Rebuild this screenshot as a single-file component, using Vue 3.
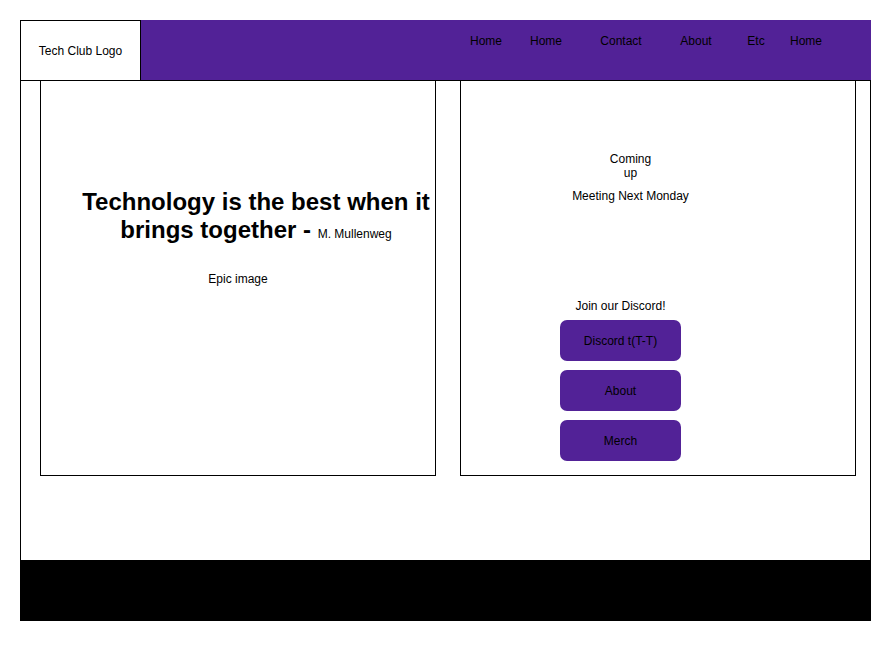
<script setup>
const links = [
  { label: 'Home', size: 'medium' },
  { label: 'Home', size: 'medium' },
  { label: 'Contact', size: 'wide' },
  { label: 'About', size: 'medium' },
  { label: 'Etc', size: 'medium' },
  { label: 'Home', size: 'narrow' },
]
const actions = ['Discord t(T-T)', 'About', 'Merch']
</script>

<template>
  <div class="page">
    <header class="header">
      <div class="logo">Tech Club Logo</div>
      <nav class="nav">
        <a v-for="(link, i) in links" :key="i" href="#" :class="link.size">{{ link.label }}</a>
      </nav>
    </header>
    <main class="main">
      <section class="panel quote">
        <h1>Technology is the best when it brings together - <small>M. Mullenweg</small></h1>
        <p>Epic image</p>
      </section>
      <section class="panel side">
        <div class="column">
          <div class="events">
            <p>Coming<br />up</p>
            <p>Meeting Next Monday</p>
          </div>
          <p class="join">Join our Discord!</p>
          <div class="actions">
            <button v-for="action in actions" :key="action" type="button">{{ action }}</button>
          </div>
        </div>
      </section>
    </main>
    <footer class="footer"></footer>
  </div>
</template>

<style>
body {
  background: #fff;
}
</style>

<style scoped>
.page {
  margin: 20px;
  color: #000;
  font: 12px/14px "Liberation Sans", Arial, sans-serif;
}
.page * {
  box-sizing: border-box;
}
p,
h1 {
  margin: 0;
}
.header {
  display: flex;
  background: #522297;
  border-bottom: 1px solid #000;
}
.logo {
  display: flex;
  align-items: center;
  justify-content: center;
  width: 121px;
  height: 60px;
  background: #fff;
  border: 1px solid #000;
  border-bottom: 0;
}
.nav {
  display: flex;
  align-items: flex-start;
  margin-left: auto;
  padding: 14px 45px 0 0;
}
.nav a {
  color: inherit;
  text-align: center;
  text-decoration: none;
}
.narrow {
  width: 40px;
}
.medium {
  width: 60px;
}
.wide {
  width: 90px;
}
.main {
  display: grid;
  grid-template-columns: 1fr 1fr;
  gap: 24px;
  padding: 0 14px 84px 19px;
  border: 1px solid #000;
  border-width: 0 1px;
}
.panel {
  border: 1px solid #000;
  border-top: 0;
  text-align: center;
}
.quote h1 {
  padding: 107px 0 24px 36px;
  font-size: 24px;
  line-height: 28px;
}
.quote small {
  font-size: 12px;
  font-weight: 400;
}
.side {
  padding: 71px 0 14px 99px;
}
.column {
  width: 121px;
}
.events {
  display: grid;
  gap: 9px;
  width: 121px;
  margin-left: 10px;
}
.join {
  margin-top: 96px;
}
.actions {
  display: grid;
  gap: 9px;
  margin-top: 7px;
}
.actions button {
  height: 41px;
  padding: 0;
  border: 0;
  border-radius: 7px;
  background: #522297;
  color: inherit;
  font: inherit;
}
.footer {
  height: 61px;
  background: #000;
}
</style>
